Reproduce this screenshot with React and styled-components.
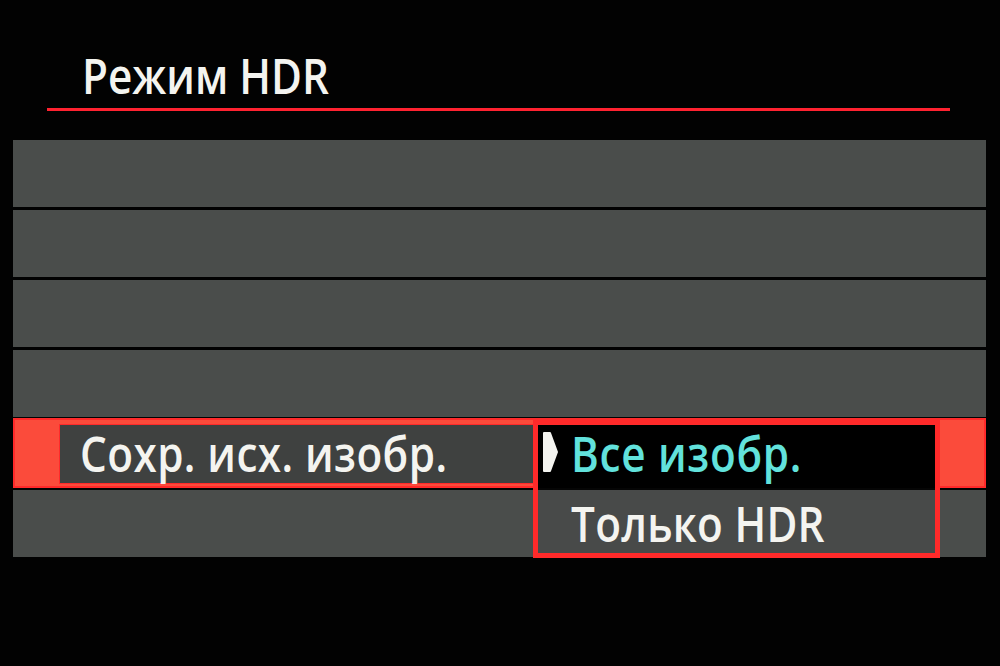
import React from "react";
import styled, { createGlobalStyle } from "styled-components";

const GlobalStyle = createGlobalStyle`
  html, body {
    margin: 0;
    padding: 0;
    background: #020202;
  }
  body {
    font-family: "Open Sans", "Noto Sans", sans-serif;
  }
`;

const Screen = styled.div`
  width: 1000px;
  height: 666px;
  background: #020202;
  overflow: hidden;
  display: flex;
  flex-direction: column;
`;

const Header = styled.div`
  margin: 0 0 0 47px;
  width: 903px;
  height: 111px;
  border-bottom: 3px solid #ff2230;
  box-sizing: border-box;
  padding: 46px 0 0 35px;
`;

/* the camera font is a narrow semibold sans: Open Sans SemiBold squeezed a little */
const Text = styled.span`
  display: inline-block;
  font-size: 48px;
  line-height: 60px;
  font-weight: 600;
  letter-spacing: ${(p) => p.spacing || 0}px;
  color: ${(p) => p.color || "#f4f4f0"};
  white-space: nowrap;
  transform: scaleX(0.88);
  transform-origin: left center;
`;

const List = styled.div`
  margin: 29px 0 0 13px;
  width: 973px;
  display: flex;
  flex-direction: column;
  gap: 3px;
`;

const Row = styled.div`
  height: 67px;
  background: #4a4d4b;
`;

const SelectedRow = styled.div`
  position: relative;
  height: 70px;
  margin: -2px 0 -1px;
  background: #fb4b3b;
  box-shadow: inset 0 0 0 2px #ff2a2a;
  box-sizing: border-box;
  padding: 7px 0 5px 47px;
  display: flex;
`;

const Label = styled.div`
  width: 473px;
  height: 58px;
  background: #3f4140;
  box-shadow: 0 0 0 1px #ff2a2a;
  display: flex;
  align-items: center;
  padding-left: 20px;
  box-sizing: border-box;
`;

const Dropdown = styled.div`
  position: absolute;
  left: 520px;
  top: 0;
  width: 407px;
  height: 140px;
  box-sizing: border-box;
  border: 5px solid #ff2a2a;
  border-top-width: 7px;
  background: #050505;
  display: flex;
  flex-direction: column;
  gap: 2px;
  z-index: 2;
`;

const Option = styled.div`
  height: 63px;
  box-sizing: border-box;
  display: flex;
  align-items: center;
  padding: ${(p) => (p.active ? "0 0 5px 33px" : "4px 0 0 33px")};
  background: ${(p) => (p.active ? "#000" : "#484a49")};
  position: relative;
`;

const Pointer = styled.svg`
  position: absolute;
  left: 4px;
  top: 6px;
`;

const options = [
  { text: "Все изобр.", active: true, spacing: 0.8 },
  { text: "Только HDR", active: false, spacing: 0.3 },
];

const App = () => {
  return (
    <Screen>
      <GlobalStyle />
      <Header>
        <Text>Режим HDR</Text>
      </Header>
      <List>
        <Row />
        <Row />
        <Row />
        <Row />
        <SelectedRow>
          <Label>
            <Text spacing={0.5}>Сохр. исх. изобр.</Text>
          </Label>
          <Dropdown>
            {options.map((o, i) => (
              <Option key={i} active={o.active}>
                {o.active && (
                  <Pointer width="16" height="42" viewBox="0 0 16 42">
                    <path d="M2 2 L8 2 L15 21 L8 40 L2 40 Z" fill="#f4f4f0" stroke="#f4f4f0" strokeWidth="2" strokeLinejoin="round" />
                  </Pointer>
                )}
                <Text spacing={o.spacing} color={o.active ? "#62e2dc" : "#f4f4f0"}>
                  {o.text}
                </Text>
              </Option>
            ))}
          </Dropdown>
        </SelectedRow>
        <Row />
      </List>
    </Screen>
  );
};

export default App;
